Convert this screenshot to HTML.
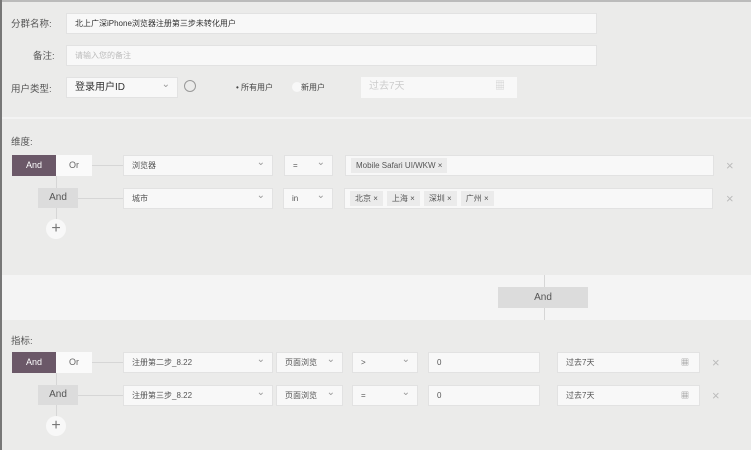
<!DOCTYPE html>
<html><head><meta charset="utf-8"><style>
*{margin:0;padding:0;box-sizing:border-box}
body{width:751px;height:450px;overflow:hidden;background:#ebebea;position:relative;font-family:"Liberation Sans","Noto Sans CJK SC",sans-serif;color:#444;font-size:9px}
.a{position:absolute}
.in{position:absolute;background:#f8f8f8;border:1px solid #e2e2e2;height:21px;line-height:19px;padding-left:8px;font-size:8px;color:#555}
.lab{position:absolute;font-size:9.5px;color:#555}
.sel:after{content:"⌄";position:absolute;right:7px;top:-3px;color:#999;font-size:10px}
.and{position:absolute;background:#6b5868;color:#fff;text-align:center;font-size:9px;line-height:21px}
.or{position:absolute;background:#fafafa;color:#666;text-align:center;font-size:9px;line-height:21px}
.g{position:absolute;background:#dcdcdc;color:#555;text-align:center;font-size:10px;line-height:20px}
.tag{display:inline-block;background:#ebebeb;padding:0 5px;margin-right:4px;line-height:15px;margin-top:1px;font-size:8px}
.x{position:absolute;color:#bbb;font-size:13px}
.plus{position:absolute;width:20px;height:20px;border-radius:50%;background:#f8f8f8;color:#777;text-align:center;line-height:19px;font-size:16px}
.ln{position:absolute;background:#d6d6d6}
</style></head><body>
<div class="a" style="left:0;top:0;width:2px;height:450px;background:#777"></div>
<div class="a" style="left:2px;top:0;width:749px;height:2px;background:#bbb"></div>

<div class="lab" style="left:11px;top:16px">分群名称:</div>
<div class="in" style="left:66px;top:13px;width:531px;color:#333">北上广深iPhone浏览器注册第三步未转化用户</div>
<div class="lab" style="left:33px;top:48px">备注:</div>
<div class="in" style="left:66px;top:45px;width:531px;color:#bbb">请输入您的备注</div>
<div class="lab" style="left:11px;top:81px">用户类型:</div>
<div class="in sel" style="left:66px;top:77px;width:112px;font-size:10px;color:#333">登录用户ID</div>
<div class="a" style="left:184px;top:80px;width:12px;height:12px;border:1px solid #999;border-radius:50%"></div>
<div class="a" style="left:236px;top:82px;font-size:8px">• 所有用户</div>
<div class="a" style="left:292px;top:82px;width:10px;height:10px;border-radius:50%;background:#f8f8f8"></div>
<div class="a" style="left:301px;top:82px;font-size:8px">新用户</div>
<div class="in" style="left:361px;top:77px;width:156px;color:#ccc;font-size:10px;border:none">过去7天<span style="position:absolute;right:12px;color:#ccc">▦</span></div>

<div class="a" style="left:2px;top:117px;width:749px;height:2px;background:#f3f3f3"></div>
<div class="lab" style="left:11px;top:134px">维度:</div>
<div class="and" style="left:12px;top:155px;width:44px">And</div>
<div class="or" style="left:56px;top:155px;width:36px">Or</div>
<div class="ln" style="left:92px;top:165px;width:31px;height:1px"></div>
<div class="ln" style="left:56px;top:176px;width:1px;height:45px"></div>
<div class="in sel" style="left:123px;top:155px;width:150px">浏览器</div>
<div class="in sel" style="left:284px;top:155px;width:49px">=</div>
<div class="in" style="left:345px;top:155px;width:369px;padding-left:5px"><span class="tag">Mobile Safari UI/WKW ×</span></div>
<div class="x" style="left:726px;top:158px">×</div>

<div class="g" style="left:38px;top:188px;width:40px">And</div>
<div class="ln" style="left:78px;top:198px;width:45px;height:1px"></div>
<div class="in sel" style="left:123px;top:188px;width:150px">城市</div>
<div class="in sel" style="left:283px;top:188px;width:50px">in</div>
<div class="in" style="left:344px;top:188px;width:369px;padding-left:5px"><span class="tag">北京 ×</span><span class="tag">上海 ×</span><span class="tag">深圳 ×</span><span class="tag">广州 ×</span></div>
<div class="x" style="left:726px;top:191px">×</div>
<div class="plus" style="left:46px;top:219px">+</div>

<div class="a" style="left:2px;top:275px;width:749px;height:45px;background:#f4f4f4"></div>
<div class="ln" style="left:544px;top:275px;width:1px;height:45px"></div>
<div class="g" style="left:498px;top:287px;width:90px;height:21px;line-height:21px">And</div>

<div class="lab" style="left:11px;top:333px">指标:</div>
<div class="and" style="left:12px;top:352px;width:44px">And</div>
<div class="or" style="left:56px;top:352px;width:36px">Or</div>
<div class="ln" style="left:92px;top:362px;width:31px;height:1px"></div>
<div class="ln" style="left:56px;top:373px;width:1px;height:45px"></div>
<div class="in sel" style="left:123px;top:352px;width:150px">注册第二步_8.22</div>
<div class="in sel" style="left:276px;top:352px;width:67px">页面浏览</div>
<div class="in sel" style="left:352px;top:352px;width:66px">&gt;</div>
<div class="in" style="left:428px;top:352px;width:112px">0</div>
<div class="in" style="left:557px;top:352px;width:143px">过去7天<span style="position:absolute;right:10px;color:#777">▦</span></div>
<div class="x" style="left:712px;top:355px">×</div>

<div class="g" style="left:38px;top:385px;width:40px">And</div>
<div class="ln" style="left:78px;top:395px;width:45px;height:1px"></div>
<div class="in sel" style="left:123px;top:385px;width:150px">注册第三步_8.22</div>
<div class="in sel" style="left:276px;top:385px;width:67px">页面浏览</div>
<div class="in sel" style="left:352px;top:385px;width:66px">=</div>
<div class="in" style="left:428px;top:385px;width:112px">0</div>
<div class="in" style="left:557px;top:385px;width:143px">过去7天<span style="position:absolute;right:10px;color:#777">▦</span></div>
<div class="x" style="left:712px;top:388px">×</div>
<div class="plus" style="left:46px;top:416px">+</div>
</body></html>
